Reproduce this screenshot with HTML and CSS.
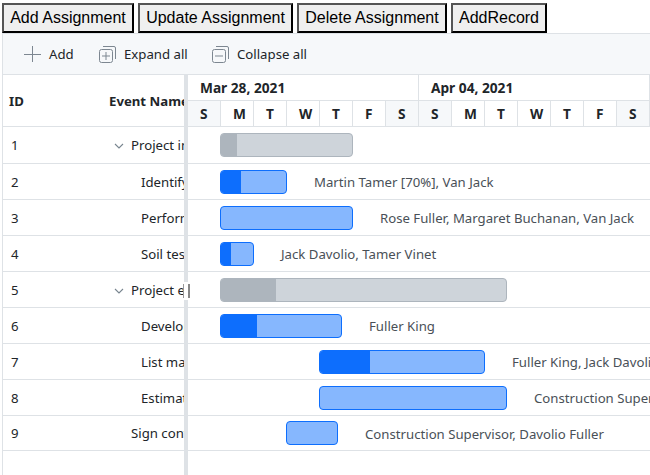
FILE: index.html
```html
<!DOCTYPE html>
<html lang="en">
<head>
<meta charset="utf-8">
<title>Gantt</title>
<link rel="stylesheet" href="styles.css">
</head>
<body>
<div class="actions">
<button class="b1">Add Assignment</button><button class="b2">Update Assignment</button><button class="b3">Delete Assignment</button><button class="b4">AddRecord</button>
</div>
<div class="gantt">
<div class="toolbar">
<div class="tool add"><svg width="18" height="18" viewBox="0 0 18 18"><path d="M9.500 1v16M1 9.500h17"/></svg><span>Add</span></div>
<div class="tool expand"><svg width="19" height="19" viewBox="0 0 19 19"><rect x="1.5" y="4.5" width="13" height="13" rx="2"/><path d="M8 7v8M4 11h8M5 1.500H16Q17.500 1.500 17.500 3V14"/></svg><span>Expand all</span></div>
<div class="tool collapse"><svg width="19" height="19" viewBox="0 0 19 19"><rect x="1.500" y="4.500" width="13" height="13" rx="2"/><path d="M4 11h8M5 1.500H16Q17.500 1.500 17.500 3V14"/></svg><span>Collapse all</span></div>
</div>
<div class="panes">
<div class="grid">
<div class="grid-head"><span class="id">ID</span><span class="name">Event Name</span></div>
<div class="cell first"><span class="id">1</span><svg width="10" height="6" viewBox="0 0 10 6"><path d="M1 1l4 4 4-4"/></svg><span class="parent">Project initiation</span></div>
<div class="cell"><span class="id">2</span><span class="child">Identify site location</span></div>
<div class="cell"><span class="id">3</span><span class="child">Perform soil test</span></div>
<div class="cell"><span class="id">4</span><span class="child">Soil test approval</span></div>
<div class="cell"><span class="id">5</span><svg width="10" height="6" viewBox="0 0 10 6"><path d="M1 1l4 4 4-4"/></svg><span class="parent">Project estimation</span></div>
<div class="cell"><span class="id">6</span><span class="child">Develop floor plan</span></div>
<div class="cell"><span class="id">7</span><span class="child">List materials</span></div>
<div class="cell"><span class="id">8</span><span class="child">Estimation approval</span></div>
<div class="cell last"><span class="id">9</span><span class="leaf">Sign contract</span></div>
</div>
<div class="splitter"><div class="grip"></div></div>
<div class="chart">
<div class="weeks"><div>Mar 28, 2021</div><div>Apr 04, 2021</div></div>
<div class="days"><div class="off">S</div><div>M</div><div>T</div><div>W</div><div>T</div><div>F</div><div class="off">S</div><div class="off">S</div><div>M</div><div>T</div><div>W</div><div>T</div><div>F</div><div class="off">S</div></div>
<div class="row first" style="--s:32px;--w:133px;--p:16px"><div class="bar summary"><i></i></div></div>
<div class="row" style="--s:32px;--w:67px;--p:20px"><div class="bar"><i></i></div><span>Martin Tamer [70%], Van Jack</span></div>
<div class="row" style="--s:32px;--w:133px;--p:0px"><div class="bar"><i></i></div><span>Rose Fuller, Margaret Buchanan, Van Jack</span></div>
<div class="row" style="--s:32px;--w:34px;--p:10px"><div class="bar"><i></i></div><span>Jack Davolio, Tamer Vinet</span></div>
<div class="row" style="--s:32px;--w:287px;--p:55px"><div class="bar summary"><i></i></div></div>
<div class="row" style="--s:32px;--w:122px;--p:36px"><div class="bar"><i></i></div><span>Fuller King</span></div>
<div class="row" style="--s:131px;--w:166px;--p:50px"><div class="bar"><i></i></div><span>Fuller King, Jack Davolio</span></div>
<div class="row" style="--s:131px;--w:188px;--p:0px"><div class="bar"><i></i></div><span>Construction Supervisor</span></div>
<div class="row last" style="--s:98px;--w:52px;--p:0px"><div class="bar"><i></i></div><span>Construction Supervisor, Davolio Fuller</span></div>
</div>
</div>
</div>
</body>
</html>
```
FILE: styles.css
```css
* { box-sizing: border-box; }
body { margin: 0; width: 650px; height: 475px; overflow: hidden; background: #fff; color: #212529; font: 13.2px/20px "Noto Sans", "Open Sans", sans-serif; }
.actions { display: flex; gap: 4px; padding: 3px 0 0 2px; height: 33px; }
button { height: 30px; padding: 0; appearance: none; border: 2px solid; border-color: #555 #000 #000 #555; border-radius: 0; background: #efefef; color: #000; font: 16px/24px "Liberation Sans", Arial, sans-serif; white-space: nowrap; }
.b1 { width: 132px; }
.b2 { width: 155px; }
.b3 { width: 150px; }
.b4 { width: 96px; }
.gantt { margin-left: 2px; height: 442px; border-left: 1px solid #dee2e6; border-top: 1px solid #dee2e6; overflow: hidden; }
.toolbar { display: flex; align-items: center; height: 41px; background: #f6f8fa; border-bottom: 1px solid #dee2e6; padding-left: 20px; }
.tool { display: flex; align-items: center; }
.tool svg { fill: none; stroke: #7d8791; stroke-width: 1; }
.add { width: 75px; }
.add span { margin-left: 8px; }
.expand { width: 113px; }
.expand span, .collapse span { margin-left: 7px; }
.panes { display: flex; height: 400px; }
.grid { width: 181px; overflow: hidden; white-space: nowrap; }
.grid-head { display: flex; align-items: center; height: 52px; border-bottom: 1px solid #dee2e6; font-weight: 700; padding-left: 6px; }
.grid-head .id { width: 100px; flex: none; }
.cell { display: flex; align-items: center; height: 36px; border-bottom: 1px solid #dee2e6; padding-left: 8px; }
.first { height: 37px !important; }
.last { height: 35px !important; }
.cell .id { width: 103px; flex: none; }
.cell svg { flex: none; fill: none; stroke: #78858f; stroke-width: 1.1; position: relative; top: 1px; }
.parent { margin-left: 7px; }
.child { margin-left: 27px; }
.leaf { margin-left: 17px; }
.splitter { position: relative; width: 4px; background: #dee2e6; }
.grip { position: absolute; left: -1px; top: 207px; width: 7px; height: 18px; background: linear-gradient(#999, #999) 0 2px / 1px 14px no-repeat, linear-gradient(#888, #888) 5px 2px / 2px 14px no-repeat, #fff; }
.chart { width: 462px; overflow: hidden; }
.weeks, .days { display: flex; height: 26px; font-weight: 700; line-height: 25px; font-size: 13.7px; }
.weeks div { width: 231px; padding-left: 12px; border-right: 1px solid #dee2e6; border-bottom: 1px solid #dee2e6; }
.days div { width: 33px; padding-left: 12px; border-right: 1px solid #dee2e6; border-bottom: 1px solid #dee2e6; }
.days .off { background: #f6f8fa; }
.row { display: flex; align-items: flex-start; height: 36px; padding: 6px 0 0 var(--s); border-bottom: 1px solid #dee2e6; white-space: nowrap; color: #495057; }
.row.last { padding-top: 5px; }
.bar { flex: none; width: var(--w); height: 24px; border: 1px solid #0d6efd; border-radius: 4px; background: #86b7fe; overflow: hidden; }
.bar i { display: block; width: var(--p); height: 100%; background: #0d6efd; }
.summary { border-color: #adb5bd; background: #ced4da; }
.summary i { background: #adb5bd; }
.row span { margin: 2px 0 0 27px; }
.row.last span { margin-top: 3px; }
```
